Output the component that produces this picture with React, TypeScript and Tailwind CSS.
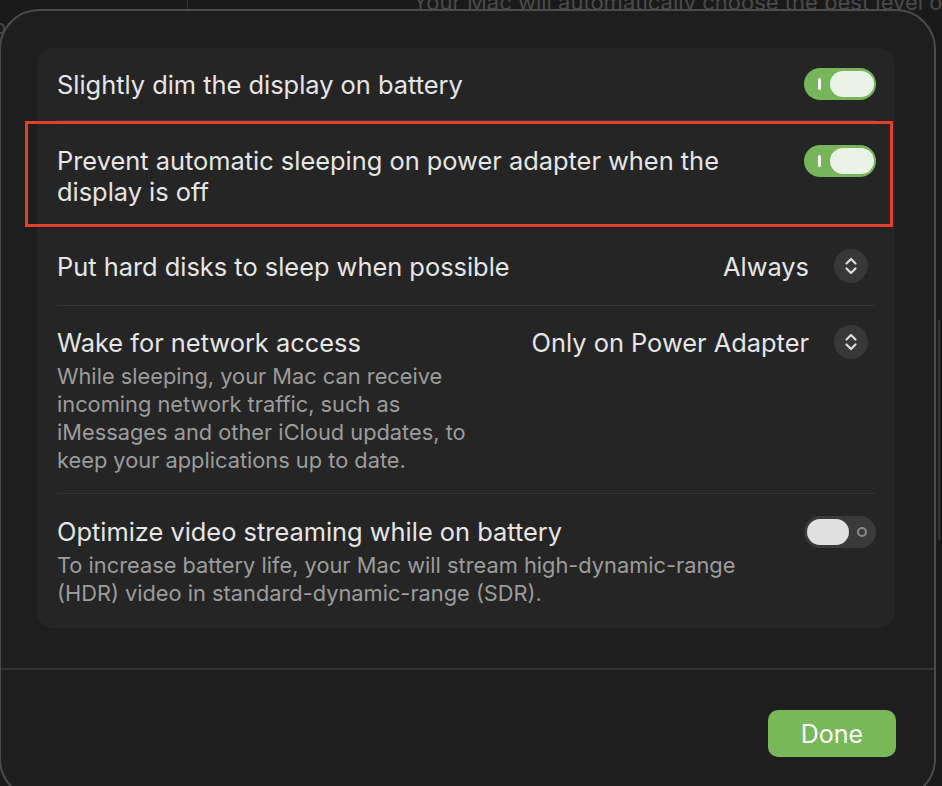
import React from 'react'

const FONT = { fontFamily: 'Inter, "Noto Sans", "Liberation Sans", sans-serif' }

function Toggle({ on }: { on: boolean }) {
  if (on) {
    return (
      <div className="shrink-0 w-[72px] h-[32px] rounded-full bg-[#76b55a] flex items-center pl-[14px] pr-[2px] justify-between">
        <div className="w-[3px] h-[12px] rounded-full bg-white" />
        <div className="w-[44px] h-[26px] rounded-full bg-[#ebf3e6]" />
      </div>
    )
  }
  return (
    <div className="shrink-0 w-[72px] h-[32px] rounded-full bg-[#3a3a3a] flex items-center pl-[3px] pr-[9px] justify-between">
      <div className="w-[42px] h-[26px] rounded-full bg-[#e0e0e0]" />
      <div className="w-[10px] h-[10px] rounded-full border-[2px] border-[#8a8a8a]" />
    </div>
  )
}

function Stepper() {
  return (
    <div className="shrink-0 w-[34px] h-[34px] rounded-full bg-[#383838] flex items-center justify-center mr-[8px]">
      <svg width="14" height="20" viewBox="0 0 14 20" fill="none" stroke="#dcdcdc" strokeWidth="2.2" strokeLinecap="round" strokeLinejoin="round">
        <path d="M2.5 7.5 L7 3 L11.5 7.5" />
        <path d="M2.5 12.5 L7 17 L11.5 12.5" />
      </svg>
    </div>
  )
}

function Divider() {
  return <div className="mx-[20px] h-px bg-[#343434]" />
}

export default function App() {
  return (
    <div className="relative w-[942px] h-[786px] overflow-hidden bg-[#1a1a1a]" style={FONT}>
      {/* window behind the sheet */}
      <div className="absolute left-[413px] top-[-14px] text-[22px] text-[#4a4a4a] whitespace-nowrap">
        Your Mac will automatically choose the best level of
      </div>
      <div className="absolute left-[187px] top-0 w-px h-[9px] bg-[#333]" />
      <div className="absolute left-[-6px] top-[12px] text-[20px] text-[#4a4a4a]">or</div>
      <div className="absolute left-[938px] top-[320px] w-[2px] h-[220px] bg-[#2d3a2a]" />

      <div className="relative ml-[-1px] mt-[9px] w-[937px] h-[790px] rounded-[40px] border-[2px] border-[#4b4b4b] bg-[#1e1e1e] flex flex-col">
        <div className="mt-[37px] ml-[36px] w-[858px] rounded-[16px] bg-[#252525] text-[#e6e6e6]">
          {/* row 1 */}
          <div className="h-[72px] px-[20px] pr-[19px] flex items-center justify-between">
            <span className="text-[25.4px] leading-[31px]">Slightly dim the display on battery</span>
            <Toggle on />
          </div>
          <Divider />

          {/* row 2 */}
          <div className="relative pt-[24px] pb-[19px] px-[20px] pr-[19px] flex items-start justify-between">
            <span className="text-[25.4px] leading-[31px] w-[700px]">
              Prevent automatic sleeping on power adapter when the display is off
            </span>
            <Toggle on />
            <div className="absolute left-[-12px] right-[2px] top-0 bottom-[-1px] border-[3px] border-[#e4402a] pointer-events-none" />
          </div>
          <Divider />

          {/* row 3 */}
          <div className="h-[78px] px-[20px] pr-[19px] flex items-center justify-between">
            <span className="text-[25.4px] leading-[31px]">Put hard disks to sleep when possible</span>
            <div className="flex items-center gap-[25px]">
              <span className="text-[25.4px] leading-[31px]">Always</span>
              <Stepper />
            </div>
          </div>
          <Divider />

          {/* row 4 */}
          <div className="pt-[21px] pb-[19px] px-[20px] pr-[19px] flex items-start justify-between">
            <div className="flex flex-col gap-[4px]">
              <span className="text-[25.4px] leading-[31px]">Wake for network access</span>
              <span className="text-[21.8px] leading-[28px] text-[#9c9c9c] w-[445px]">
                While sleeping, your Mac can receive incoming network traffic, such as iMessages and other iCloud updates, to keep your applications up to date.
              </span>
            </div>
            <div className="flex items-center gap-[25px] mt-[-2px]">
              <span className="text-[25.4px] leading-[31px]">Only on Power Adapter</span>
              <Stepper />
            </div>
          </div>
          <Divider />

          {/* row 5 */}
          <div className="pt-[22px] pb-[21px] px-[20px] pr-[19px] flex items-start justify-between">
            <div className="flex flex-col gap-[4px]">
              <span className="text-[25.4px] leading-[31px]">Optimize video streaming while on battery</span>
              <span className="text-[21.8px] leading-[28px] text-[#9c9c9c] w-[710px]">
                To increase battery life, your Mac will stream high-dynamic-range (HDR) video in standard-dynamic-range (SDR).
              </span>
            </div>
            <Toggle on={false} />
          </div>
        </div>

        <div className="mt-[40px] h-[2px] bg-[#333333]" />

        <div className="flex justify-end pr-[38px] pt-[40px]">
          <button className="w-[128px] h-[47px] rounded-[10px] bg-[#78b859] text-white text-[25px] font-normal pt-[3px]">
            Done
          </button>
        </div>
      </div>
    </div>
  )
}
